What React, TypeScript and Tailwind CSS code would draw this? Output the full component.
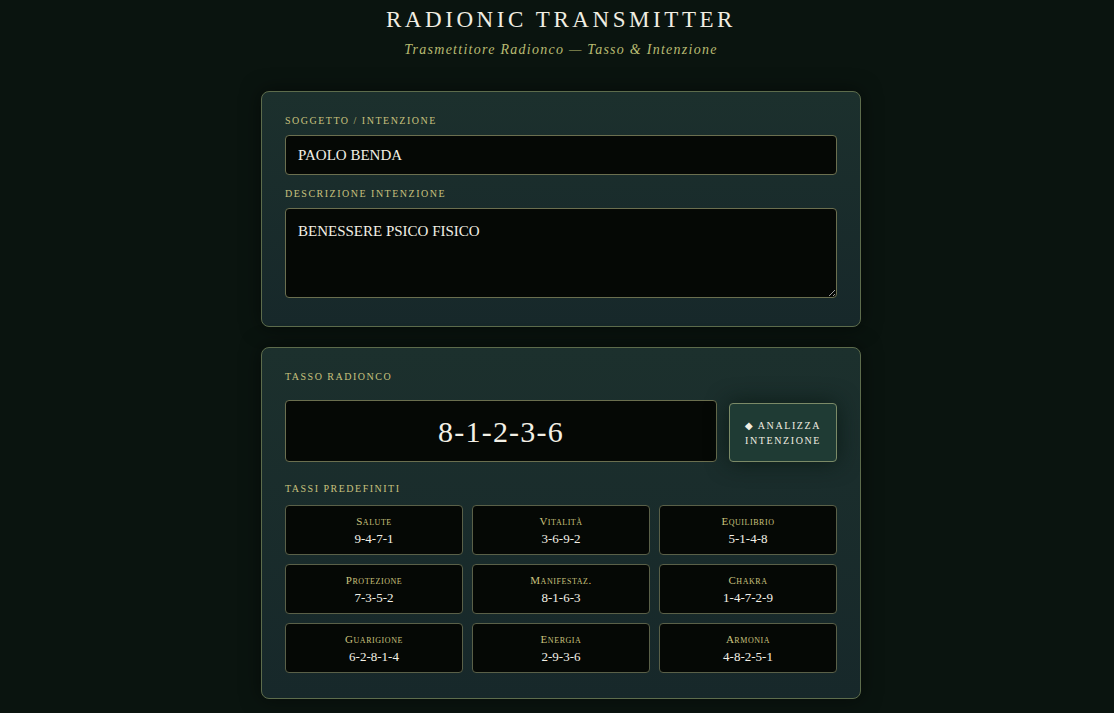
import React from "react";

const presets = [
  { name: "Salute", rate: "9-4-7-1" },
  { name: "Vitalità", rate: "3-6-9-2" },
  { name: "Equilibrio", rate: "5-1-4-8" },
  { name: "Protezione", rate: "7-3-5-2" },
  { name: "Manifestaz.", rate: "8-1-6-3" },
  { name: "Chakra", rate: "1-4-7-2-9" },
  { name: "Guarigione", rate: "6-2-8-1-4" },
  { name: "Energia", rate: "2-9-3-6" },
  { name: "Armonia", rate: "4-8-2-5-1" },
];

const serif = { fontFamily: '"Liberation Serif", "DejaVu Serif", serif' };

function Label({ children }: { children: React.ReactNode }) {
  return (
    <div className="mb-[7px] text-[10px] uppercase leading-[14px] tracking-[0.15em] text-[#c9c27e]">
      {children}
    </div>
  );
}

export default function App() {
  return (
    <div className="min-h-[713px] bg-[#0a140f] pb-4 pl-[8px]" style={serif}>
      <header className="pt-[7px] text-center">
        <h1 className="text-[23px] leading-[26px] uppercase tracking-[0.155em] text-[#f1eee2]">
          Radionic Transmitter
        </h1>
        <p className="mt-[9px] text-[14px] italic leading-[16px] tracking-[0.09em] text-[#b9bb72]">
          Trasmettitore Radionco — Tasso &amp; Intenzione
        </p>
      </header>

      <main className="mx-auto mt-[33px] flex w-[600px] flex-col gap-[20px]">
        <section className="rounded-[8px] border border-[#5d6c4c] bg-gradient-to-b from-[#1c302d] to-[#17282a] px-[23px] pb-[28px] pt-[22px] shadow-[0_0_20px_rgba(0,0,0,0.5)]">
          <Label>Soggetto / Intenzione</Label>
          <input
            readOnly
            value="PAOLO BENDA"
            className="block h-[40px] w-full rounded-[4px] border border-[#6b6f4f] bg-[#050805] px-[12px] text-[15px] text-[#f3f0e6] outline-none"
            style={serif}
          />
          <div className="mt-[12px]">
            <Label>Descrizione Intenzione</Label>
          </div>
          <textarea
            readOnly
            value="BENESSERE PSICO FISICO"
            className="block h-[90px] w-full resize-y rounded-[4px] border border-[#6b6f4f] bg-[#050805] px-[12px] py-[12px] text-[15px] leading-[20px] text-[#f3f0e6] outline-none"
            style={serif}
          />
        </section>

        <section className="rounded-[8px] border border-[#5d6c4c] bg-gradient-to-b from-[#1c302d] to-[#17282a] px-[23px] pb-[25px] pt-[22px] shadow-[0_0_20px_rgba(0,0,0,0.5)]">
          <Label>Tasso Radionco</Label>
          <div className="mt-[16px] flex items-stretch gap-[12px]">
            <div className="flex h-[62px] flex-1 items-center justify-center rounded-[4px] border border-[#6b6f4f] bg-[#050805] text-[30px] tracking-[0.04em] text-[#f3f0e6]">
              8-1-2-3-6
            </div>
            <button
              className="mt-[3px] h-[59px] w-[108px] rounded-[4px] border border-[#7b8a67] bg-[#1f3b34] text-[10px] uppercase leading-[15px] tracking-[0.16em] text-[#f1eee2] shadow-[0_0_22px_rgba(10,25,20,0.9)]"
              style={serif}
            >
              ◆ Analizza
              <br />
              Intenzione
            </button>
          </div>
          <div className="mt-[20px]">
            <Label>Tassi Predefiniti</Label>
          </div>
          <div className="mt-[9px] grid grid-cols-3 gap-[9px]">
            {presets.map((p) => (
              <div
                key={p.name}
                className="flex h-[50px] flex-col items-center justify-center rounded-[4px] border border-[#5a6048] bg-[#050805]"
              >
                <div className="text-[11px] leading-[14px] tracking-[0.05em] text-[#c9c27e] [font-variant:small-caps]">
                  {p.name}
                </div>
                <div className="mt-[3px] text-[13px] leading-[16px] text-[#f3f0e6]">{p.rate}</div>
              </div>
            ))}
          </div>
        </section>
      </main>
    </div>
  );
}
